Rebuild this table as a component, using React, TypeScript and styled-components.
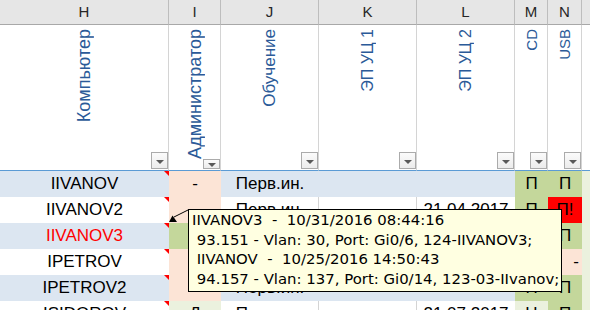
import React from 'react';
import styled, { createGlobalStyle } from 'styled-components';

const GlobalStyle = createGlobalStyle`
  html, body { margin: 0; padding: 0; background: #ffffff; overflow: hidden; }
  body { font-family: "Liberation Sans", Arial, sans-serif; }
`;

const COLORS = {
  band: '#DCE6F1',
  peach: '#FCE4D6',
  green: '#C4D79B',
  lightGreen: '#EBF1DE',
  red: '#FF0000',
  grid: '#D4D4D4',
};

const Sheet = styled.div`
  position: relative;
  width: 590px;
  height: 310px;
  overflow: hidden;
  display: grid;
  grid-template-columns: 169px 52px 98px 98px 98px 33px 34px 1fr;
  grid-template-rows: 25px 146px repeat(6, 26px);
  background: #ffffff;
`;

const ColLetter = styled.div<{ $last?: boolean }>`
  background: #e6e6e6;
  border-bottom: 1px solid #a8a8a8;
  border-right: ${(p) => (p.$last ? 'none' : '1px solid #bdbdbd')};
  color: #262626;
  font: 15px/24px "Liberation Sans", Arial, sans-serif;
  text-align: center;
`;

const HeadCell = styled.div<{ $last?: boolean }>`
  display: flex;
  flex-direction: column;
  align-items: center;
  border-right: ${(p) => (p.$last ? 'none' : `1px solid ${COLORS.grid}`)};
  border-bottom: 1px solid #5b9bd5;
  background: #ffffff;
  overflow: hidden;
`;

const VerticalLabel = styled.span<{ $size: number }>`
  margin-top: 4px;
  writing-mode: vertical-rl;
  transform: rotate(180deg);
  color: #2b5a98;
  font-family: "Liberation Sans", Arial, sans-serif;
  font-size: ${(p) => p.$size}px;
  line-height: ${(p) => p.$size}px;
  white-space: nowrap;
`;

const FilterButton = styled.div`
  margin-top: auto;
  margin-bottom: 1px;
  align-self: flex-end;
  width: 17px;
  height: 17px;
  box-sizing: border-box;
  border: 1px solid #ababab;
  background: linear-gradient(#fbfbfb, #ececec);
  display: flex;
  align-items: center;
  justify-content: center;
  &::after {
    content: '';
    margin-top: 2px;
    border-top: 4px solid #595959;
    border-left: 4px solid transparent;
    border-right: 4px solid transparent;
  }
`;

const Cell = styled.div<{ $bg?: string; $color?: string; $align?: string; $grid?: boolean }>`
  position: relative;
  background: ${(p) => p.$bg ?? '#ffffff'};
  color: ${(p) => p.$color ?? '#000000'};
  text-align: ${(p) => p.$align ?? 'center'};
  padding-right: ${(p) => (p.$align === 'right' ? '3px' : '0')};
  font: 17px/26px "Liberation Sans", Arial, sans-serif;
  white-space: nowrap;
  overflow: hidden;
  box-shadow: ${(p) => (p.$grid ? `inset -1px 0 0 ${COLORS.grid}` : 'none')};
`;

const NoteMark = styled.span`
  position: absolute;
  top: 0;
  right: 0;
  width: 0;
  height: 0;
  border-top: 5px solid ${COLORS.red};
  border-left: 5px solid transparent;
`;

const Comment = styled.div`
  position: absolute;
  left: 188px;
  top: 209px;
  width: 374px;
  height: 83px;
  box-sizing: border-box;
  background: #ffffe1;
  border: 1px solid #000000;
  padding: 1px 3px;
  color: #000000;
  font: 14.9px/19.5px "DejaVu Sans", "Liberation Sans", sans-serif;
  white-space: pre;
`;

const CommentArrow = styled.svg`
  position: absolute;
  left: 0;
  top: 0;
  pointer-events: none;
`;

type CellData = { t?: string; bg?: string; color?: string; align?: string };
type RowData = { band: boolean; note: boolean; cells: CellData[] };

const letters = ['H', 'I', 'J', 'K', 'L', 'M', 'N', ''];
const labels: { text: string; size: number }[] = [
  { text: 'Компьютер', size: 18 },
  { text: 'Администратор', size: 18 },
  { text: 'Обучение', size: 17 },
  { text: 'ЭП УЦ 1', size: 16 },
  { text: 'ЭП УЦ 2', size: 16 },
  { text: 'CD', size: 15 },
  { text: 'USB', size: 15 },
  { text: '', size: 17 },
];

const { peach, green, lightGreen, red } = COLORS;

const rows: RowData[] = [
  {
    band: true,
    note: true,
    cells: [
      { t: 'IIVANOV' },
      { t: '-', bg: peach },
      { t: 'Перв.ин.' },
      {},
      {},
      { t: 'П', bg: green },
      { t: 'П', bg: green },
      { bg: lightGreen },
    ],
  },
  {
    band: false,
    note: true,
    cells: [
      { t: 'IIVANOV2' },
      { bg: peach },
      { t: 'Перв.ин.' },
      {},
      { t: '21.04.2017' },
      { t: 'П', bg: green },
      { t: 'П!', bg: red },
      { bg: lightGreen },
    ],
  },
  {
    band: true,
    note: true,
    cells: [
      { t: 'IIVANOV3', color: '#FF0000' },
      { bg: green },
      { t: 'Перв.ин.' },
      {},
      {},
      { t: 'П', bg: green },
      { t: 'П', bg: green },
      { bg: lightGreen },
    ],
  },
  {
    band: false,
    note: true,
    cells: [
      { t: 'IPETROV' },
      { bg: peach },
      {},
      {},
      {},
      { t: 'П', bg: green },
      { t: '-', bg: peach, align: 'right' },
      { bg: lightGreen },
    ],
  },
  {
    band: true,
    note: true,
    cells: [
      { t: 'IPETROV2' },
      { bg: peach },
      { t: 'Перв.ин.' },
      {},
      {},
      { t: 'П', bg: green },
      { t: 'П', bg: green },
      { bg: lightGreen },
    ],
  },
  {
    band: false,
    note: true,
    cells: [
      { t: 'ISIDOROV' },
      { t: 'Д', bg: lightGreen },
      { t: 'Перв.ин.' },
      {},
      { t: '21.07.2017' },
      { t: 'Н', bg: lightGreen },
      { t: 'П', bg: green },
      { bg: lightGreen },
    ],
  },
];

const commentLines = [
  'IIVANOV3  -  10/31/2016 08:44:16',
  ' 93.151 - Vlan: 30, Port: Gi0/6, 124-IIVANOV3;',
  ' IIVANOV  -  10/25/2016 14:50:43',
  ' 94.157 - Vlan: 137, Port: Gi0/14, 123-03-IIvanov;',
];

export default function App() {
  return (
    <>
      <GlobalStyle />
      <Sheet>
        {letters.map((l, i) => (
          <ColLetter key={`l${i}`} $last={i === letters.length - 1}>
            {l}
          </ColLetter>
        ))}
        {labels.map((label, i) => (
          <HeadCell key={`h${i}`} $last={i === labels.length - 1}>
            {label.text && <VerticalLabel $size={label.size}>{label.text}</VerticalLabel>}
            {label.text && <FilterButton />}
          </HeadCell>
        ))}
        {rows.map((row, r) => {
          const fills = row.cells.map((c) => c.bg ?? (row.band ? COLORS.band : undefined));
          return row.cells.map((c, i) => {
            const grid = !fills[i] && i + 1 < fills.length && !fills[i + 1];
            return (
              <Cell
                key={`c${r}-${i}`}
                $bg={fills[i]}
                $color={c.color}
                $align={c.align}
                $grid={grid}
              >
                {c.t}
                {i === 0 && row.note && <NoteMark />}
              </Cell>
            );
          });
        })}
        <CommentArrow width="590" height="310" viewBox="0 0 590 310">
          <line x1="174" y1="217" x2="189" y2="209.5" stroke="#000" strokeWidth="1" />
          <polygon points="169,222 177,222 172.5,215.5" fill="#000" />
        </CommentArrow>
        <Comment>{commentLines.join('\n')}</Comment>
      </Sheet>
    </>
  );
}
